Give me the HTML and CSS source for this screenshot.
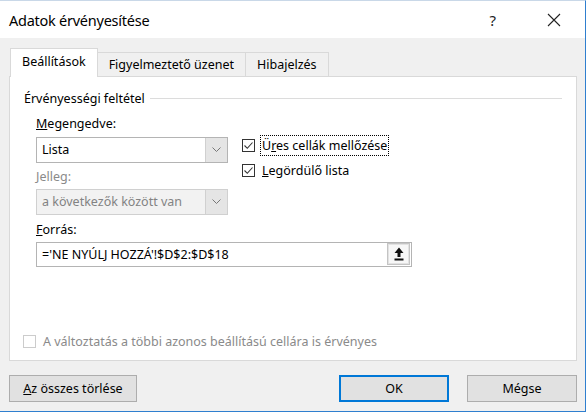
FILE: index.html
```html
<!DOCTYPE html>
<html>
<head>
    <title>Adatok érvényesítése</title>
    <link rel="stylesheet" href="styles.css">
</head>
<body>
    <div class="dialog">
        <div class="titlebar">
            <span class="title">Adatok érvényesítése</span>
            <span class="help">?</span>
            <svg class="close" width="14" height="14" viewBox="0 0 14 14">
                <path d="M1 1 L13 13 M13 1 L1 13" stroke="#222" stroke-width="1.1" fill="none"/>
            </svg>
        </div>

        <div class="content">
            <div class="tabs">
                <div class="tab active">Beállítások</div>
                <div class="tab">Figyelmeztető üzenet</div>
                <div class="tab">Hibajelzés</div>
            </div>

            <div class="panel">
                <div class="group-title">
                    <span>Érvényességi feltétel</span>
                    <span class="rule"></span>
                </div>

                <div class="criteria">
                    <div class="left-col">
                        <div class="label"><u>M</u>egengedve:</div>
                        <div class="combo">
                            <span class="combo-text">Lista</span>
                            <span class="combo-btn">
                                <svg width="9" height="6" viewBox="0 0 9 6"><path d="M0.5 0.5 L4.5 4.5 L8.5 0.5" stroke="#777" fill="none"/></svg>
                            </span>
                        </div>
                        <div class="label disabled">Jelleg:</div>
                        <div class="combo disabled">
                            <span class="combo-text">a következők között van</span>
                            <span class="combo-btn">
                                <svg width="9" height="6" viewBox="0 0 9 6"><path d="M0.5 0.5 L4.5 4.5 L8.5 0.5" stroke="#777" fill="none"/></svg>
                            </span>
                        </div>
                    </div>
                    <div class="right-col">
                        <div class="check-row">
                            <span class="checkbox checked">
                                <svg width="11" height="11" viewBox="0 0 11 11"><path d="M1.5 5.5 L4.3 8.3 L9.5 2.5" stroke="#333" stroke-width="1.1" fill="none"/></svg>
                            </span>
                            <span class="check-label focused">Ü<u>r</u>es cellák mellőzése</span>
                        </div>
                        <div class="check-row">
                            <span class="checkbox checked">
                                <svg width="11" height="11" viewBox="0 0 11 11"><path d="M1.5 5.5 L4.3 8.3 L9.5 2.5" stroke="#333" stroke-width="1.1" fill="none"/></svg>
                            </span>
                            <span class="check-label"><u>L</u>egördülő lista</span>
                        </div>
                    </div>
                </div>

                <div class="source">
                    <div class="label source-label"><u>F</u>orrás:</div>
                    <div class="ref-input">
                        <span class="ref-text">='NE NYÚLJ HOZZÁ'!$D$2:$D$18</span>
                        <span class="ref-btn">
                            <svg width="10" height="14" viewBox="0 0 10 14">
                                <path d="M5 0.5 L9.5 6 L6.5 6 L6.5 10 L3.5 10 L3.5 6 L0.5 6 Z" fill="#111"/>
                                <rect x="0.5" y="11.5" width="9" height="2" fill="#111"/>
                            </svg>
                        </span>
                    </div>
                </div>

                <div class="apply-row">
                    <span class="checkbox disabled"></span>
                    <span class="apply-label">A változtatás a többi azonos beállítású cellára is érvényes</span>
                </div>
            </div>

            <div class="buttons">
                <button class="btn clear"><u>A</u>z összes törlése</button>
                <span class="spacer"></span>
                <button class="btn default">OK</button>
                <button class="btn">Mégse</button>
            </div>
        </div>
    </div>
</body>
</html>
```

FILE: styles.css
```css
body {
    margin: 0;
    background-color: #fff;
    font-family: "Noto Sans", "Open Sans", sans-serif;
    font-size: 12.5px;
    color: #000;
}
.dialog {
    width: 585px;
    height: 410px;
    background-color: #f0f0f0;
    border-right: 1px solid #2f7fcf;
    border-bottom: 1px solid #2f7fcf;
    border-top: 1px solid #c9d8e8;
    display: flex;
    flex-direction: column;
}
.titlebar {
    height: 37px;
    background-color: #fff;
    display: flex;
    align-items: center;
    padding-left: 9px;
}
.title {
    font-size: 14.5px;
    flex: 1;
    letter-spacing: -0.25px;
}
.help {
    font-size: 15px;
    color: #222;
    margin-right: 51px;
}
.close {
    margin-right: 24px;
}
.content {
    flex: 1;
    display: flex;
    flex-direction: column;
    padding: 10px 8px 0 9px;
}
.tabs {
    display: flex;
    align-items: flex-end;
    height: 28px;
    margin-left: 1px;
}
.tab {
    height: 23px;
    line-height: 23px;
    padding: 0 11px;
    border: 1px solid #d9d9d9;
    border-bottom: none;
    border-left: none;
    background-color: #f0f0f0;
}
.tab.active {
    height: 28px;
    line-height: 26px;
    background-color: #fff;
    border-left: 1px solid #d9d9d9;
    position: relative;
    top: 1px;
}
.panel {
    height: 283px;
    background-color: #fff;
    border: 1px solid #d9d9d9;
    display: flex;
    flex-direction: column;
}
.group-title {
    display: flex;
    align-items: center;
    gap: 5px;
    height: 16px;
    margin: 13px 14px 0 14px;
}
.rule {
    flex: 1;
    border-top: 1px solid #dcdcdc;
}
.criteria {
    display: flex;
    padding-left: 26px;
    margin-top: 10px;
}
.left-col {
    width: 192px;
}
.label {
    height: 16px;
    line-height: 16px;
}
.label.disabled {
    color: #8a8a8a;
    margin-top: 6px;
}
.combo {
    margin-top: 5px;
    height: 24px;
    border: 1px solid #b4b4b4;
    display: flex;
    background-color: #fff;
}
.combo.disabled {
    margin-top: 4px;
    background-color: #f2f2f2;
    border-color: #d0d0d0;
    color: #838383;
}
.combo-text {
    flex: 1;
    line-height: 24px;
    padding-left: 5px;
}
.combo-btn {
    width: 21px;
    background-color: #e5e5e5;
    border-left: 1px solid #d0d0d0;
    display: flex;
    align-items: center;
    justify-content: center;
}
.right-col {
    margin-left: 14px;
    padding-top: 19px;
    display: flex;
    flex-direction: column;
    gap: 5px;
}
.check-row {
    display: flex;
    align-items: center;
    gap: 5px;
    height: 20px;
}
.checkbox {
    width: 11px;
    height: 11px;
    border: 1px solid #333;
    background-color: #fff;
    display: flex;
    align-items: center;
    justify-content: center;
}
.checkbox.disabled {
    border-color: #cccccc;
}
.check-label {
    padding: 1px 1px;
    border: 1px dotted transparent;
}
.check-label.focused {
    border-color: #000;
}
.source {
    padding-left: 26px;
}
.source-label {
    margin-top: 7px;
}
.ref-input {
    margin-top: 4px;
    width: 374px;
    height: 23px;
    border: 1px solid #b4b4b4;
    display: flex;
}
.ref-text {
    flex: 1;
    line-height: 23px;
    padding-left: 5px;
}
.ref-btn {
    width: 21px;
    height: 20px;
    margin: 0 1px 1px 0;
    border: 1px solid #c4c4c4;
    box-shadow: inset 0 0 0 1px #e2e2e2;
    background-color: #f7f7f7;
    display: flex;
    align-items: center;
    justify-content: center;
}
.apply-row {
    margin-top: auto;
    margin-bottom: 9px;
    padding-left: 13px;
    display: flex;
    align-items: center;
    gap: 7px;
    height: 20px;
}
.apply-label {
    color: #8a8a8a;
}
.buttons {
    display: flex;
    margin-top: 14px;
    gap: 18px;
}
.btn {
    height: 27px;
    width: 110px;
    font-family: "Noto Sans", "Open Sans", sans-serif;
    font-size: 12.5px;
    background-color: #e1e1e1;
    border: 1px solid #adadad;
    padding: 0;
    color: #000;
}
.btn.clear {
    width: 128px;
}
.btn.default {
    border: 2px solid #0078d7;
}
.spacer {
    flex: 1;
}
```
